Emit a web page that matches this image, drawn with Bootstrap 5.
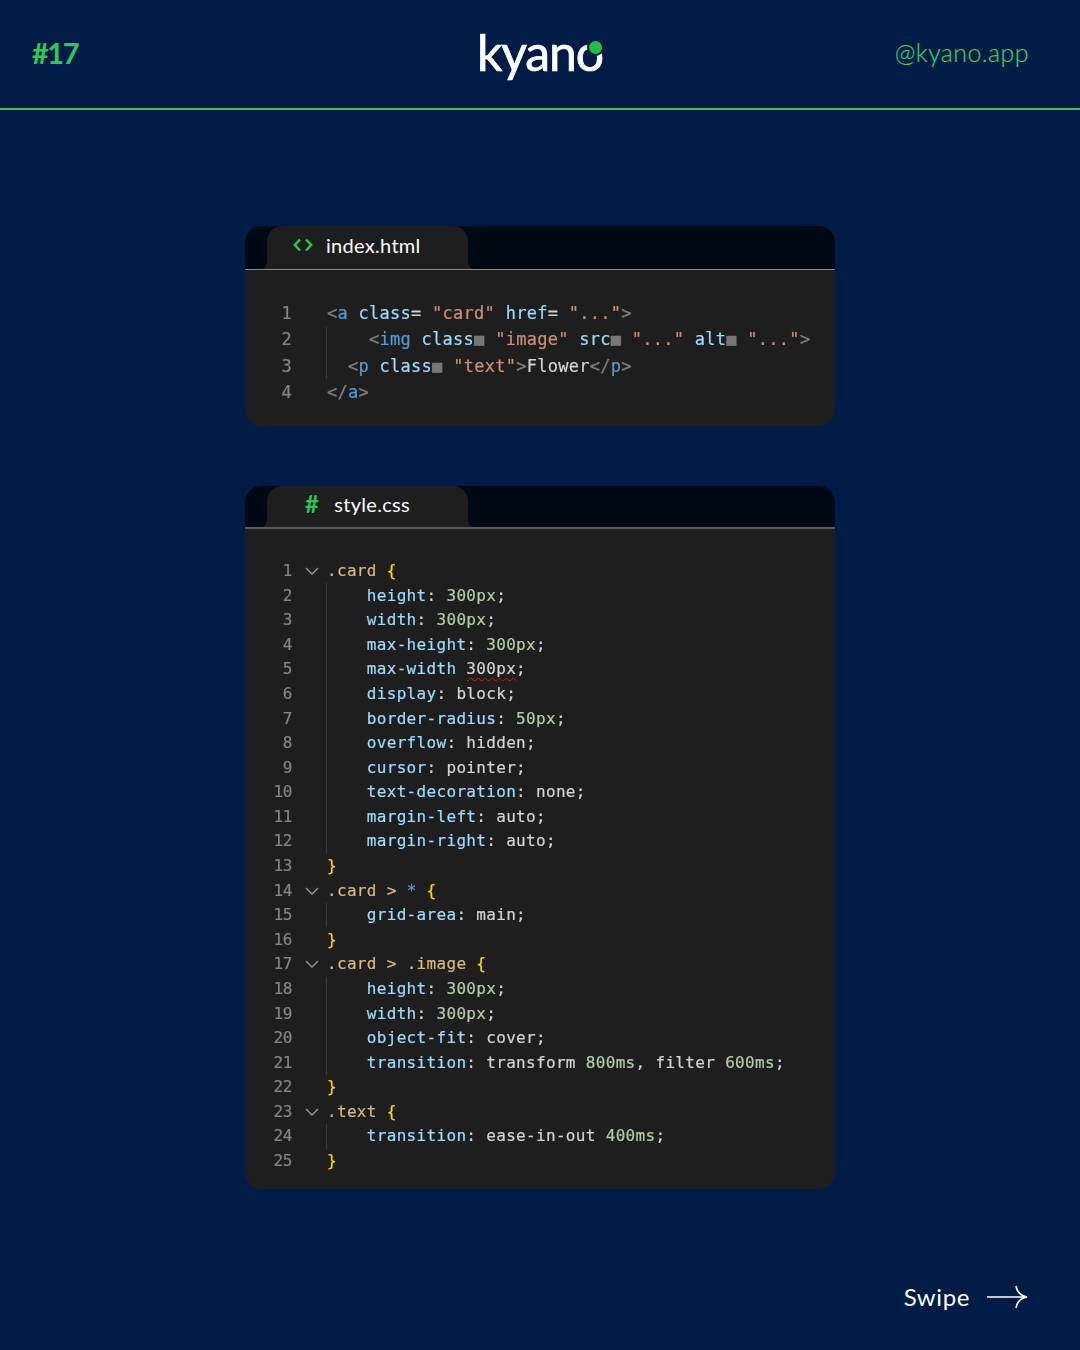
<!DOCTYPE html>
<html lang="en"><head><meta charset="utf-8"><title>kyano</title>
<link href="https://cdn.jsdelivr.net/npm/bootstrap@5.3.0/dist/css/bootstrap.min.css" rel="stylesheet">
<style>
html,body{background:#011b47;margin:0}
.slide{width:1080px;height:1350px;background:#011b47;font-family:"Lato","Noto Sans",sans-serif}
.topbar{height:109.5px;border-bottom:2px solid #2fc75a;padding:0 51px 0 32px}
.tag-no{color:#2fc75a;font:700 29px/1 "Lato",sans-serif;letter-spacing:-1.5px;width:219px;margin-top:-2px}
.handle{color:#36d263;font:300 25px/1 "Lato",sans-serif;-webkit-text-stroke:.2px #36d263;width:200px;text-align:right;letter-spacing:.4px;margin-top:-3px}
.brand{position:relative;color:#fff;font:400 50px/1 "Lato",sans-serif;-webkit-text-stroke:.7px #fff;letter-spacing:-1.2px;margin-top:-3px;width:126px;white-space:nowrap}
.brand-dot{position:absolute;right:1px;top:14px;width:13px;height:13px;border-radius:50%;background:#1fc13f;box-shadow:0 0 0 2px #011b47}
.editor{width:590px;background:#1e1e1e;border-radius:16px;overflow:hidden;margin:0 auto}
.first-ed{margin-top:116px}.second-ed{margin-top:60px}
.tabbar{background:#000814;border-bottom:1px solid #8a8a8a;height:44px;padding-left:22px}
.second-ed .tabbar{height:43px;border-bottom-width:2px;border-color:#5c5c5c}
.tabitem{position:relative;width:201px;height:100%;background:#1e1e1e;border-radius:15px 15px 0 0;color:#fff;font:400 20px/1 "Lato",sans-serif;letter-spacing:.3px;padding-bottom:4px}
.tabitem::before,.tabitem::after{content:"";position:absolute;bottom:0;width:6px;height:13px}
.tabitem::before{left:-5px;background:radial-gradient(ellipse 6px 13px at 0 0,transparent 98%,#1e1e1e 100%)}
.tabitem::after{right:-5px;background:radial-gradient(ellipse 6px 13px at 100% 0,transparent 98%,#1e1e1e 100%)}
.html-tab{padding-left:26px;gap:13px}.css-tab{padding-left:38px;gap:15px}
.hash{color:#2dc653;font:700 24px/1 "Lato",sans-serif}
.code{font-family:"DejaVu Sans Mono",monospace;color:#d4d4d4;-webkit-text-stroke:.2px;filter:blur(.5px);padding-left:28px}
.code-a{font-size:17px;letter-spacing:.27px;padding-top:31px;padding-bottom:20px}
.code-b{font-size:16px;letter-spacing:.32px;padding-top:30px;padding-bottom:16px}
.ln{display:flex;align-items:center;white-space:pre}
.code-a .ln{height:26.33px}.code-b .ln{height:24.58px}
.num{width:19px;text-align:right;color:#858585;flex:none}
.code-b .num{letter-spacing:-.4px}
.fold{width:34px;flex:none;display:flex;justify-content:center;padding-left:5px}
.fold svg{display:block}
.txt{flex:1;height:100%;display:flex;align-items:center;border-left:1px solid transparent}
.guided .txt{border-left-color:#3a3a3a}
.g{color:#808080}.b{color:#569cd6}.at{color:#9cdcfe}.s{color:#ce9178}.sel{color:#d7ba7d}.n{color:#b5cea8}.br{color:#ffd700}.p{color:#9cdcfe}
.sq{color:#777}
.squig{text-decoration:underline wavy #e51400 1px;text-underline-offset:3px}
.swipe{color:#fff;font:400 24px/1 "Lato",sans-serif;letter-spacing:.6px;margin-top:auto;padding:0 51px 41px 0;gap:17px}
</style></head>
<body>
<div class="slide d-flex flex-column">
  <header class="topbar d-flex align-items-center justify-content-between">
    <div class="tag-no">#17</div>
    <div class="brand">kyano<span class="brand-dot"></span></div>
    <div class="handle">@kyano.app</div>
  </header>

  <section class="editor first-ed">
    <div class="tabbar d-flex"><div class="tabitem html-tab d-flex align-items-center">
      <svg width="20" height="14" viewBox="0 0 20 14" fill="none" stroke="#2dc653" stroke-width="2.4"><path d="M7 1.5 1.8 7 7 12.5M13 1.5 18.2 7 13 12.5"/></svg>
      <span>index.html</span></div></div>
    <div class="code code-a">
      <div class="ln"><span class="num">1</span><span class="fold"></span><span class="txt"><span><span class="g">&lt;</span><span class="b">a</span> <span class="at">class</span>= <span class="s">"card"</span> <span class="at">href</span>= <span class="s">"..."</span><span class="g">&gt;</span></span></span></div>
      <div class="ln guided"><span class="num">2</span><span class="fold"></span><span class="txt"><span>    <span class="g">&lt;</span><span class="b">img</span> <span class="at">class</span><span class="sq">■</span> <span class="s">"image"</span> <span class="at">src</span><span class="sq">■</span> <span class="s">"..."</span> <span class="at">alt</span><span class="sq">■</span> <span class="s">"..."</span><span class="g">&gt;</span></span></span></div>
      <div class="ln guided"><span class="num">3</span><span class="fold"></span><span class="txt"><span>  <span class="g">&lt;</span><span class="b">p</span> <span class="at">class</span><span class="sq">■</span> <span class="s">"text"</span><span class="g">&gt;</span>Flower<span class="g">&lt;/</span><span class="b">p</span><span class="g">&gt;</span></span></span></div>
      <div class="ln"><span class="num">4</span><span class="fold"></span><span class="txt"><span><span class="g">&lt;/</span><span class="b">a</span><span class="g">&gt;</span></span></span></div>
    </div>
  </section>

  <section class="editor second-ed">
    <div class="tabbar d-flex"><div class="tabitem css-tab d-flex align-items-center"><span class="hash">#</span><span>style.css</span></div></div>
    <div class="code code-b">
      <div class="ln"><span class="num">1</span><span class="fold"><svg width="14" height="8" viewBox="0 0 14 8" fill="none" stroke="#9a9a9a" stroke-width="1.3"><path d="M1 1l6 6 6-6"/></svg></span><span class="txt"><span><span class="sel">.card</span> <span class="br">{</span></span></span></div>
      <div class="ln guided"><span class="num">2</span><span class="fold"></span><span class="txt"><span>    <span class="p">height</span>: <span class="n">300px</span>;</span></span></div>
      <div class="ln guided"><span class="num">3</span><span class="fold"></span><span class="txt"><span>    <span class="p">width</span>: <span class="n">300px</span>;</span></span></div>
      <div class="ln guided"><span class="num">4</span><span class="fold"></span><span class="txt"><span>    <span class="p">max-height</span>: <span class="n">300px</span>;</span></span></div>
      <div class="ln guided"><span class="num">5</span><span class="fold"></span><span class="txt"><span>    <span class="p">max-width</span> <span class="squig">300px</span>;</span></span></div>
      <div class="ln guided"><span class="num">6</span><span class="fold"></span><span class="txt"><span>    <span class="p">display</span>: block;</span></span></div>
      <div class="ln guided"><span class="num">7</span><span class="fold"></span><span class="txt"><span>    <span class="p">border-radius</span>: <span class="n">50px</span>;</span></span></div>
      <div class="ln guided"><span class="num">8</span><span class="fold"></span><span class="txt"><span>    <span class="p">overflow</span>: hidden;</span></span></div>
      <div class="ln guided"><span class="num">9</span><span class="fold"></span><span class="txt"><span>    <span class="p">cursor</span>: pointer;</span></span></div>
      <div class="ln guided"><span class="num">10</span><span class="fold"></span><span class="txt"><span>    <span class="p">text-decoration</span>: none;</span></span></div>
      <div class="ln guided"><span class="num">11</span><span class="fold"></span><span class="txt"><span>    <span class="p">margin-left</span>: auto;</span></span></div>
      <div class="ln guided"><span class="num">12</span><span class="fold"></span><span class="txt"><span>    <span class="p">margin-right</span>: auto;</span></span></div>
      <div class="ln"><span class="num">13</span><span class="fold"></span><span class="txt"><span class="br">}</span></span></div>
      <div class="ln"><span class="num">14</span><span class="fold"><svg width="14" height="8" viewBox="0 0 14 8" fill="none" stroke="#9a9a9a" stroke-width="1.3"><path d="M1 1l6 6 6-6"/></svg></span><span class="txt"><span><span class="sel">.card</span> <span class="sel">&gt;</span> <span class="b">*</span> <span class="br">{</span></span></span></div>
      <div class="ln guided"><span class="num">15</span><span class="fold"></span><span class="txt"><span>    <span class="p">grid-area</span>: main;</span></span></div>
      <div class="ln"><span class="num">16</span><span class="fold"></span><span class="txt"><span class="br">}</span></span></div>
      <div class="ln"><span class="num">17</span><span class="fold"><svg width="14" height="8" viewBox="0 0 14 8" fill="none" stroke="#9a9a9a" stroke-width="1.3"><path d="M1 1l6 6 6-6"/></svg></span><span class="txt"><span><span class="sel">.card</span> <span class="sel">&gt;</span> <span class="sel">.image</span> <span class="br">{</span></span></span></div>
      <div class="ln guided"><span class="num">18</span><span class="fold"></span><span class="txt"><span>    <span class="p">height</span>: <span class="n">300px</span>;</span></span></div>
      <div class="ln guided"><span class="num">19</span><span class="fold"></span><span class="txt"><span>    <span class="p">width</span>: <span class="n">300px</span>;</span></span></div>
      <div class="ln guided"><span class="num">20</span><span class="fold"></span><span class="txt"><span>    <span class="p">object-fit</span>: cover;</span></span></div>
      <div class="ln guided"><span class="num">21</span><span class="fold"></span><span class="txt"><span>    <span class="p">transition</span>: transform <span class="n">800ms</span>, filter <span class="n">600ms</span>;</span></span></div>
      <div class="ln"><span class="num">22</span><span class="fold"></span><span class="txt"><span class="br">}</span></span></div>
      <div class="ln"><span class="num">23</span><span class="fold"><svg width="14" height="8" viewBox="0 0 14 8" fill="none" stroke="#9a9a9a" stroke-width="1.3"><path d="M1 1l6 6 6-6"/></svg></span><span class="txt"><span><span class="sel">.text</span> <span class="br">{</span></span></span></div>
      <div class="ln guided"><span class="num">24</span><span class="fold"></span><span class="txt"><span>    <span class="p">transition</span>: ease-in-out <span class="n">400ms</span>;</span></span></div>
      <div class="ln"><span class="num">25</span><span class="fold"></span><span class="txt"><span class="br">}</span></span></div>
    </div>
  </section>

  <footer class="swipe d-flex align-items-center justify-content-end">
    <span>Swipe</span>
    <svg width="42" height="24" viewBox="0 0 42 24" fill="none" stroke="#fff" stroke-width="1.6"><path d="M0 12H40M29 1c1 6 5 10 11 11-6 1-10 5-11 11"/></svg>
  </footer>
</div>
<script src="https://cdn.jsdelivr.net/npm/bootstrap@5.3.0/dist/js/bootstrap.bundle.min.js"></script>
</body></html>
